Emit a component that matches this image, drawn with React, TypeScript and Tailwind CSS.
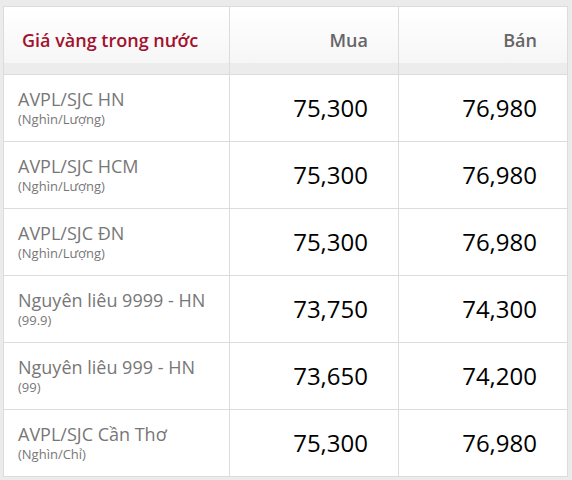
const ROWS = [
  { name: 'AVPL/SJC HN', unit: '(Nghìn/Lượng)', buy: '75,300', sell: '76,980' },
  { name: 'AVPL/SJC HCM', unit: '(Nghìn/Lượng)', buy: '75,300', sell: '76,980' },
  { name: 'AVPL/SJC ĐN', unit: '(Nghìn/Lượng)', buy: '75,300', sell: '76,980' },
  { name: 'Nguyên liêu 9999 - HN', unit: '(99.9)', buy: '73,750', sell: '74,300' },
  { name: 'Nguyên liêu 999 - HN', unit: '(99)', buy: '73,650', sell: '74,200' },
  { name: 'AVPL/SJC Cần Thơ', unit: '(Nghìn/Chỉ)', buy: '75,300', sell: '76,980' },
]

export default function App() {
  return (
    <div className="h-[480px] w-[572px] bg-[#ebebeb] pl-[3px] pt-[6px] font-['Open_Sans',sans-serif]">
      <div className="w-[565px] border border-[#dcdcdc] bg-white">
        {/* Header */}
        <div className="flex h-[68px] border-b border-[#dcdcdc] bg-[linear-gradient(to_bottom,#ffffff_0px,#f6f6f6_56px,#ececec_56px,#ececec_68px)]">
          <div className="flex w-[226px] items-center border-r border-[#dcdcdc] pl-[18px] text-[18px] font-semibold text-[#a3112d]">
            Giá vàng trong nước
          </div>
          <div className="flex w-[169px] items-center justify-end border-r border-[#dcdcdc] pr-[30px] text-[18px] font-semibold text-[#666]">
            Mua
          </div>
          <div className="flex w-[168px] items-center justify-end pr-[30px] text-[18px] font-semibold text-[#666]">
            Bán
          </div>
        </div>

        {/* Rows */}
        {ROWS.map((r, i) => (
          <div
            key={i}
            className={i < ROWS.length - 1 ? 'flex h-[67px] border-b border-[#dcdcdc]' : 'flex h-[66px]'}
          >
            <div className="flex w-[226px] flex-col justify-center border-r border-[#dcdcdc] pl-[14px]">
              <div className="text-[18px] leading-[22px] text-[#777]">{r.name}</div>
              <div className="text-[13px] leading-[19px] text-[#777]">{r.unit}</div>
            </div>
            <div className="flex w-[169px] items-center justify-end border-r border-[#dcdcdc] pr-[30px] text-[24px] text-black">
              {r.buy}
            </div>
            <div className="flex w-[168px] items-center justify-end pr-[30px] text-[24px] text-black">
              {r.sell}
            </div>
          </div>
        ))}
      </div>
    </div>
  )
}
